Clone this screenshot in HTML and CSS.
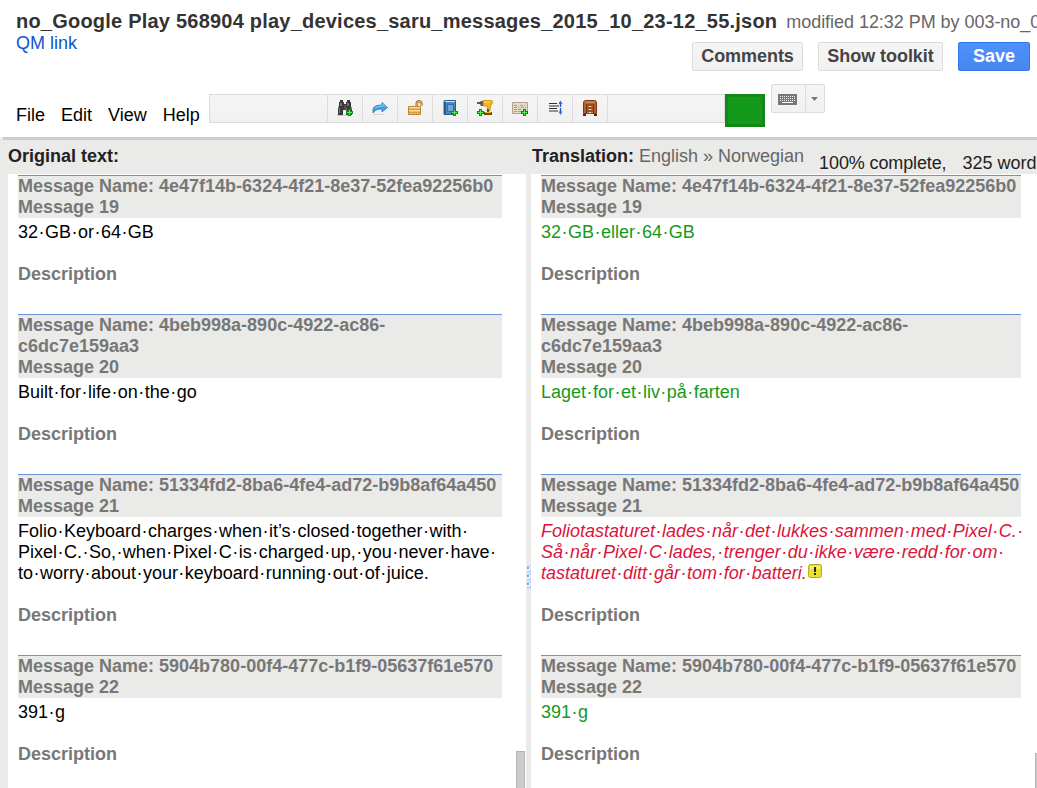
FILE: index.html
```
<!DOCTYPE html>
<html lang="en">
<head>
<meta charset="utf-8">
<title>Translator</title>
<link rel="stylesheet" href="styles.css">
</head>
<body>
<header class="header">
  <div class="title-row"><h1 class="title">no_Google Play 568904 play_devices_saru_messages_2015_10_23-12_55.json</h1><span class="modified">modified 12:32 PM by 003-no_0</span></div>
  <div class="actions-row">
    <a class="qm">QM link</a>
    <div class="actions"><button class="btn comments">Comments</button><button class="btn toolkit">Show toolkit</button><button class="btn save">Save</button></div>
  </div>
  <div class="menu-row">
    <nav class="menu"><span>File</span><span>Edit</span><span>View</span><span>Help</span></nav>
    <div class="toolbar">
      <span class="tool wide"></span>
      <span class="tool"><svg class="icon" viewBox="0 0 16 16"><path d="M0 15h12v1H0z" fill="#ccc"/><path d="M3 0h3v2h1v2h2V2h1V0h3v2h1v4l1 4v5H9v-5H6v5H1V9l1-4V2h1z" fill="#3a3a3a"/><path d="M3 3h2v3H3zM10 3h2v3h-2zM2 8h1v5H2zM9 8h1v5H9z" fill="#777"/><path d="M7 5h2v4H7z" fill="#555"/><path d="M11 9h3v2h2v3h-2v2h-3v-2H9v-3h2z" fill="#078b12"/><path d="M12 10h1v2h2v1h-2v2h-1v-2h-2v-1h2z" fill="#4ef04c"/></svg></span>
      <span class="tool"><svg class="icon" viewBox="0 0 16 16"><path d="M1 14h11v1H1z" fill="#d5d5d5"/><path d="M1 13V9q1-4 9-4V2.500l5.500 5L10 12V9Q4 8.500 1 13z" fill="#3ea2e8" stroke="#2b78b9" stroke-width=".8"/><path d="M3 8q2-2 8-2V4.500l3 3" fill="none" stroke="#89d2ff"/></svg></span>
      <span class="tool"><svg class="icon" viewBox="0 0 16 16"><path d="M9.800 7V4Q9.800 1.300 12 1.300T14.500 4v1.500" fill="none" stroke="#a77932" stroke-width="2.600"/><path d="M9.800 7V4q0-2.400 2.200-2.600T14.500 4v1" fill="none" stroke="#e0bc80"/><path d="M1.500 6.500h12v8h-12z" fill="#eebd58" stroke="#bb8530"/><path d="M2 9h11v1H2zM2 12h11v1H2z" fill="#cf9c42"/><path d="M2 7h11v1H2zM2 10h11v1H2z" fill="#fee09a"/></svg></span>
      <span class="tool"><svg class="icon" viewBox="0 0 16 16"><path d="M2 1.500Q2 .5 3 .5h10.500v14H2z" fill="#4d89bd" stroke="#285d91"/><path d="M3 2v12" stroke="#24527c" stroke-width="1.500"/><path d="M5.500 4.500h6v7h-6z" fill="#72a6d4" stroke="#376d9d"/><path d="M3 1.500h10" stroke="#d5e7f5"/><path d="M11 9h3v2h2v3h-2v2h-3v-2H9v-3h2z" fill="#078b12"/><path d="M12 10h1v2h2v1h-2v2h-1v-2h-2v-1h2z" fill="#4ef04c"/></svg></span>
      <span class="tool"><svg class="icon" viewBox="0 0 16 16"><path d="M0 2h3l1-1h2v5H4L3 4H0z" fill="#555"/><path d="M6 .5h8q2 0 1.500 2.500l-2 3-.5 5h-3l.5-5H6z" fill="#f5b90d" stroke="#c37b06" stroke-width=".7"/><path d="M7 2h6" stroke="#ffe36a"/><path d="M10 9h2v3h-2z" fill="#555"/><path d="M7 12h8v3H7z" fill="#6b4a18"/><path d="M8 12h6v1H8z" fill="#efb11b"/><path d="M2 9h3v2h2v3H5v2H2v-2H0v-3h2z" fill="#078b12"/><path d="M3 10h1v2h2v1H4v2H3v-2H1v-1h2z" fill="#4ef04c"/></svg></span>
      <span class="tool"><svg class="icon" viewBox="0 0 16 16"><path d="M.5 2.500h15v11H.5z" fill="#e3dac9" stroke="#b2a38e"/><path d="M2 5.500h4m2 0h5M2 7.500h5m2 0h5M2 9.500h8M2 11.500h7" stroke="#a89c8d" stroke-dasharray="3 1"/><path d="M11 9h3v2h2v3h-2v2h-3v-2H9v-3h2z" fill="#078b12"/><path d="M12 10h1v2h2v1h-2v2h-1v-2h-2v-1h2z" fill="#4ef04c"/></svg></span>
      <span class="tool"><svg class="icon" viewBox="0 0 16 16"><path d="M2 3.500h8M2 6h10M2 8.500h8M2 11h9" stroke="#333"/><path d="M13.500 2v12" stroke="#264cbd" stroke-width="1.300" stroke-dasharray="5 1"/><path d="M11.500 4l2-3.500 2 3.500zm0 7.500l2 3.500 2-3.500z" fill="#3564cf"/></svg></span>
      <span class="tool"><svg class="icon" viewBox="0 0 16 16"><path d="M1.500 2.500q0-2 2.500-2h8q2.500 0 2.500 2v11h-13z" fill="#b5612c" stroke="#78391a"/><path d="M3 2h10" stroke="#e19a60"/><path d="M4 4.500h8V14H4z" fill="#70300f"/><path d="M5 5.500h6v2H5zM5 8.500h6v2H5zM5 11.500h6v2H5z" fill="#c17338"/><path d="M7 6h2v1H7zM7 9h2v1H7zM7 12h2v1H7z" fill="#ddd"/><path d="M1 14h3v2H1zM12 14h3v2h-3z" fill="#512711"/></svg></span>
      <span class="tool last"></span>
    </div>
    <div class="status-block"></div>
    <div class="keyboard">
      <span class="key-btn"><svg class="key-icon" viewBox="0 0 19 11"><path d="M0 0h19v11H0z" fill="#777"/><path d="M2 2.500h15M2 4.500h15M2 6.500h15" stroke="#f1f1f1" stroke-dasharray="1 1"/><path d="M4 8.500h11" stroke="#fff"/></svg></span>
      <span class="key-drop"><svg class="drop-icon" viewBox="0 0 7 4"><path d="M0 0h7L3.500 4z" fill="#777"/></svg></span>
    </div>
  </div>
</header>
<main class="main">
  <div class="heads">
    <div class="head-left"><b>Original text:</b></div>
    <div class="head-right"><b>Translation:</b><span class="langs">English » Norwegian</span><span class="complete">100% complete,</span><span class="words">325 words</span></div>
  </div>
  <div class="panes">
    <section class="pane source">
      <article class="msg"><div class="label"><div>Message Name: 4e47f14b-6324-4f21-8e37-52fea92256b0</div><div>Message 19</div></div><div class="text"><p>32·GB·or·64·GB</p></div><div class="desc">Description</div></article>
      <article class="msg"><div class="label"><div>Message Name: 4beb998a-890c-4922-ac86-</div><div>c6dc7e159aa3</div><div>Message 20</div></div><div class="text"><p>Built·for·life·on·the·go</p></div><div class="desc">Description</div></article>
      <article class="msg"><div class="label"><div>Message Name: 51334fd2-8ba6-4fe4-ad72-b9b8af64a450</div><div>Message 21</div></div><div class="text"><p>Folio·Keyboard·charges·when·it’s·closed·together·with·</p><p>Pixel·C.·So,·when·Pixel·C·is·charged·up,·you·never·have·</p><p>to·worry·about·your·keyboard·running·out·of·juice.</p></div><div class="desc">Description</div></article>
      <article class="msg"><div class="label"><div>Message Name: 5904b780-00f4-477c-b1f9-05637f61e570</div><div>Message 22</div></div><div class="text"><p>391·g</p></div><div class="desc">Description</div></article>
      <div class="scroll-thumb"></div>
    </section>
    <div class="divider"><div class="grip"><i></i><i></i><i></i></div></div>
    <section class="pane target">
      <article class="msg"><div class="label"><div>Message Name: 4e47f14b-6324-4f21-8e37-52fea92256b0</div><div>Message 19</div></div><div class="text good"><p>32·GB·eller·64·GB</p></div><div class="desc">Description</div></article>
      <article class="msg"><div class="label"><div>Message Name: 4beb998a-890c-4922-ac86-</div><div>c6dc7e159aa3</div><div>Message 20</div></div><div class="text good"><p>Laget·for·et·liv·på·farten</p></div><div class="desc">Description</div></article>
      <article class="msg"><div class="label"><div>Message Name: 51334fd2-8ba6-4fe4-ad72-b9b8af64a450</div><div>Message 21</div></div><div class="text bad"><p>Foliotastaturet·lades·når·det·lukkes·sammen·med·Pixel·C.·</p><p>Så·når·Pixel·C·lades,·trenger·du·ikke·være·redd·for·om·</p><p>tastaturet·ditt·går·tom·for·batteri.<svg class="warn" viewBox="0 0 15 15"><rect x=".5" y=".5" width="13" height="13" rx="2" fill="#e9df2f" stroke="#b9ab18"/><path d="M2 2h10v3H2z" fill="#f4ef70"/><path d="M6 3h2v5H6zM6 9h2v2H6z" fill="#222"/></svg></p></div><div class="desc">Description</div></article>
      <article class="msg"><div class="label"><div>Message Name: 5904b780-00f4-477c-b1f9-05637f61e570</div><div>Message 22</div></div><div class="text good"><p>391·g</p></div><div class="desc">Description</div></article>
      <div class="scroll-thumb"></div>
    </section>
  </div>
</main>
<script src="dots.js"></script>
</body>
</html>
```
FILE: styles.css
```
* { box-sizing: border-box; }
body { margin: 0; width: 1037px; height: 788px; overflow: hidden; background: #fff; font: 18px/21px "Liberation Sans", Arial, sans-serif; color: #000; white-space: nowrap; }
p, h1 { margin: 0; }
.header { height: 137px; overflow: hidden; padding-left: 16px; }
.title-row { display: flex; align-items: baseline; height: 33px; padding-top: 9px; }
.title { font-size: 20px; line-height: 24px; color: #333; letter-spacing: .217px; flex: none; }
.modified { color: #666; margin-left: 9px; flex: none; letter-spacing: -.04px; }
.actions-row { display: flex; justify-content: space-between; height: 61px; padding-right: 7px; }
.qm { color: #15c; }
.actions { display: flex; gap: 15px; padding-top: 9px; }
.btn { height: 29px; padding: 0; border: 1px solid #dcdcdc; border-radius: 2px; background: linear-gradient(#f5f5f5, #f1f1f1); color: #444; font: bold 18px/25px "Liberation Sans", Arial, sans-serif; letter-spacing: -.05px; white-space: nowrap; }
.comments { width: 111px; }
.toolkit { width: 125px; }
.save { width: 72px; color: #fff; background: linear-gradient(#4d90fe, #4787ed); border-color: #3079ed; }
.menu-row { display: flex; height: 43px; }
.menu { display: flex; width: 193px; padding-top: 11px; gap: 16px; }
.toolbar { display: flex; flex: none; width: 516px; height: 29px; border: 1px solid #dcdcdc; background: linear-gradient(#f5f5f5, #f0f0f0); }
.tool { width: 35px; border-right: 1px solid #dcdcdc; padding: 5px 9px; }
.tool.wide { width: 118px; }
.tool.last { width: 117px; border: 0; }
.icon { display: block; width: 16px; height: 16px; }
.status-block { flex: none; width: 40px; height: 33px; background: #149a1b; border: 3px solid #128817; }
.keyboard { display: flex; flex: none; width: 54px; height: 29px; margin: -10px 0 0 6px; border: 1px solid #dcdcdc; border-radius: 2px; background: linear-gradient(#f5f5f5, #f1f1f1); }
.key-btn { width: 34px; padding: 9px 0 0 6px; border-right: 1px solid #dcdcdc; }
.key-icon { display: block; width: 19px; height: 11px; }
.key-drop { padding: 12px 0 0 5px; }
.drop-icon { display: block; width: 7px; height: 4px; }
.main { height: 651px; background: #eaeae8; padding-left: 3px; }
.heads { display: flex; height: 37px; border-top: 3px solid #ccc; color: #222; overflow: hidden; }
.head-left { width: 529px; padding: 6px 0 0 5px; flex: none; }
.head-right { display: flex; padding-top: 6px; width: 504px; overflow: hidden; }
.langs { color: #666; margin-left: 5px; }
.complete { margin: 7px 0 0 15px; letter-spacing: -.12px; }
.words { margin: 7px 0 0 16px; }
.panes { display: flex; height: 614px; margin-left: 5px; }
.pane { position: relative; height: 614px; background: #fff; overflow: hidden; padding: 1px 0 0 10px; flex: none; }
.source { width: 518px; }
.target { width: 506px; }
.msg { padding-bottom: 29px; }
.source .msg { width: 484px; }
.target .msg { width: 480px; }
.label { border-top: 1px solid #6a92d4; background: #eaeae8; color: #777; font-weight: bold; }
.text { padding: 4px 0 21px; }
.text p { width: max-content; }
.good { color: #149a1b; }
.bad { color: #dc143c; font-style: italic; }
.dot { padding: 0 .48px; }
.desc { color: #777; font-weight: bold; }
.divider { width: 5px; flex: none; display: flex; align-items: flex-start; padding: 391px 0 0 1px; }
.grip { width: 4px; height: 24px; background: #c8dbff; display: flex; flex-direction: column; gap: 5px; padding: 2px 0 0 0; }
.grip i { width: 3px; height: 3px; background: #999; border-right: 1px solid #fff; border-bottom: 1px solid #fff; }
.scroll-thumb { position: absolute; background: #ccc; border: 1px solid #b5b5b5; }
.source .scroll-thumb { left: 508px; top: 577px; width: 9px; height: 50px; }
.target .scroll-thumb { left: 504px; top: 579px; width: 10px; height: 50px; }
.warn { display: inline-block; width: 15px; height: 15px; margin-left: 1px; vertical-align: 0; }
```
FILE: dots.js
```
// Give the visible-space markers their own spacing.
document.querySelectorAll(".text p").forEach(function (p) {
  p.innerHTML = p.innerHTML.replace(/·/g, '<span class="dot">·</span>');
});
```
